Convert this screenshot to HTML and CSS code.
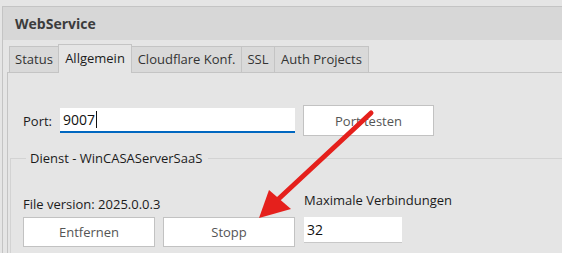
FILE: index.html
```html
<!DOCTYPE html>
<html lang="de">
<head>
    <meta charset="UTF-8">
    <meta name="viewport" content="width=device-width, initial-scale=1.0">
    <title>WebService</title>
    <link rel="stylesheet" href="styles.css">
</head>
<body>
    <div class="window">
        <div class="title">WebService</div>

        <div class="tabctl">
            <div class="tabs">
                <div class="tab tab-status">Status</div>
                <div class="tab tab-allg active">Allgemein</div>
                <div class="tab tab-cf">Cloudflare Konf.</div>
                <div class="tab tab-ssl">SSL</div>
                <div class="tab tab-auth">Auth Projects</div>
            </div>

            <div class="page">
                <div class="port-row">
                    <label class="lbl-port">Port:</label>
                    <div class="input port-input">9007<span class="caret"></span></div>
                    <button class="btn btn-test">Port testen</button>
                </div>

                <fieldset class="group">
                    <legend>Dienst - WinCASAServerSaaS</legend>
                    <div class="group-row">
                        <div class="col-left">
                            <div class="lbl">File version: 2025.0.0.3</div>
                            <div class="btns">
                                <button class="btn">Entfernen</button>
                                <button class="btn">Stopp</button>
                            </div>
                        </div>
                        <div class="col-right">
                            <div class="lbl">Maximale Verbindungen</div>
                            <div class="input max-input">32</div>
                        </div>
                    </div>
                </fieldset>
            </div>
        </div>
    </div>

    <!-- annotation arrow -->
    <svg class="arrow" width="562" height="253" viewBox="0 0 562 253">
        <line x1="371" y1="113" x2="272" y2="205" stroke="#e5201c" stroke-width="5" stroke-linecap="round"/>
        <polygon points="259,218 269,190 291,209" fill="#e5201c"/>
    </svg>
</body>
</html>
```

FILE: styles.css
```css
html, body {
	margin: 0;
	padding: 0;
	height: 100%;
	overflow: hidden;
}

body {
	background-color: #e5e5e5;
	font-family: "Open Sans", "Liberation Sans", sans-serif;
	font-size: 13px;
	color: #1b1b1b;
	position: relative;
}

.window {
	margin: 6px 0 0 2px;
	border-top: solid #c4c4c4 1px;
	border-left: solid #c4c4c4 1px;
	height: 246px;
	overflow: hidden;
}

.title {
	background-color: #d7d7d7;
	height: 33px;
	line-height: 33px;
	padding-left: 12px;
	font-weight: bold;
	font-size: 14px;
	color: #3c3c3c;
}

.tabctl {
	margin: 4px 0 0 4px;
}

.tabs {
	display: flex;
	align-items: flex-end;
	height: 28px;
	padding-left: 2px;
}

.tab {
	box-sizing: border-box;
	height: 26px;
	line-height: 24px;
	text-align: center;
	border: solid #c4c4c4 1px;
	border-bottom: none;
	border-right: none;
	background-color: #d9d9d9;
	color: #333;
}

.tab-status { width: 49px; }
.tab-allg { width: 74px; }
.tab-cf { width: 109px; }
.tab-ssl { width: 33px; }
.tab-auth { width: 95px; }

.tab:last-child {
	border-right: solid #c4c4c4 1px;
}

.tab.active {
	height: 29px;
	line-height: 27px;
	margin-bottom: -1px;
	position: relative;
	background-color: #e5e5e5;
	border-right: solid #c4c4c4 1px;
	color: #1b1b1b;
}

.tab.active + .tab {
	border-left: none;
}

.page {
	border-top: solid #c4c4c4 1px;
	border-left: solid #c4c4c4 1px;
	height: 200px;
}

.port-row {
	display: flex;
	align-items: center;
	padding: 32px 0 0 15px;
	height: 31px;
}

.lbl-port {
	width: 37px;
}

.input {
	background-color: white;
	box-sizing: border-box;
	padding-left: 3px;
	font-size: 14px;
	color: #111;
}

.port-input {
	width: 235px;
	height: 25px;
	line-height: 23px;
	border-bottom: solid #0067c0 2px;
}

.caret {
	display: inline-block;
	width: 1px;
	height: 17px;
	background-color: #111;
	vertical-align: -3px;
	margin-left: 1px;
}

.btn {
	background-color: white;
	border: solid #c2c2c2 1px;
	font-family: inherit;
	font-size: 13px;
	color: #555;
	box-sizing: border-box;
	height: 31px;
	padding: 0;
}

.btn-test {
	width: 131px;
	margin-left: 8px;
}

.group {
	margin: 13px 0 0 2px;
	padding: 0 0 0 12px;
	border: none;
	border-top: solid #d3d3d3 1px;
	border-left: solid #d3d3d3 1px;
	min-width: 0;
	height: 200px;
}

.group legend {
	margin-left: 3px;
	padding: 0 6px 0 4px;
	color: #1b1b1b;
}

.group-row {
	display: flex;
	align-items: flex-end;
	padding-top: 24px;
}

.col-left .lbl {
	height: 22px;
}

.btns {
	display: flex;
	gap: 8px;
}

.btns .btn {
	width: 132px;
	height: 30px;
}

.col-right {
	margin-left: 9px;
}

.col-right .lbl {
	height: 26px;
}

.max-input {
	width: 98px;
	height: 26px;
	line-height: 26px;
	border-bottom: solid #c8c8c8 1px;
	margin-bottom: 4px;
}

.arrow {
	position: absolute;
	left: 0;
	top: 0;
	pointer-events: none;
}
```
